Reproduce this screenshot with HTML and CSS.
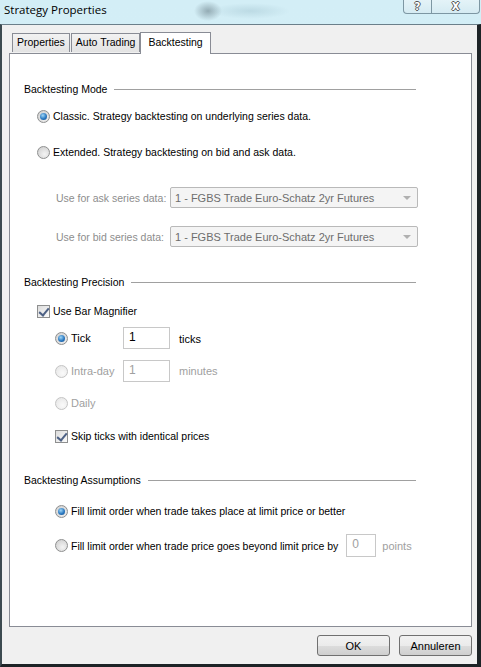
FILE: index.html
```html
<!DOCTYPE html>
<html lang="en">
<head>
    <meta charset="UTF-8">
    <title>Strategy Properties</title>
    <link rel="stylesheet" href="styles.css">
</head>
<body>
<div class="window">
    <div class="titlebar">
        <span class="caption">Strategy Properties</span>
        <div class="caption-buttons">
            <span class="cbtn help">?</span>
            <span class="cbtn close">X</span>
        </div>
    </div>
    <div class="client">
        <ul class="tabs">
            <li class="tab">Properties</li>
            <li class="tab">Auto Trading</li>
            <li class="tab active">Backtesting</li>
        </ul>
        <div class="panel">
            <div class="group-head head-mode"><span>Backtesting Mode</span><i class="rule"></i></div>

            <label class="row r-classic"><span class="radio on"></span>Classic. Strategy backtesting on underlying series data.</label>
            <label class="row r-extended"><span class="radio"></span>Extended. Strategy backtesting on bid and ask data.</label>

            <div class="row r-ask">
                <span class="field-label">Use for ask series data:</span>
                <div class="combo"><span>1 - FGBS Trade Euro-Schatz 2yr Futures</span><i class="arrow"></i></div>
            </div>
            <div class="row r-bid">
                <span class="field-label">Use for bid series data:</span>
                <div class="combo"><span>1 - FGBS Trade Euro-Schatz 2yr Futures</span><i class="arrow"></i></div>
            </div>

            <div class="group-head head-precision"><span>Backtesting Precision</span><i class="rule"></i></div>

            <label class="row r-magnifier"><span class="check on"></span>Use Bar Magnifier</label>
            <div class="row sub r-tick">
                <span class="radio on"></span><span class="opt">Tick</span>
                <span class="textbox">1</span><span class="unit">ticks</span>
            </div>
            <div class="row sub r-intra off">
                <span class="radio dis"></span><span class="opt">Intra-day</span>
                <span class="textbox dis">1</span><span class="unit">minutes</span>
            </div>
            <div class="row sub r-daily off">
                <span class="radio dis"></span><span class="opt">Daily</span>
            </div>
            <label class="row sub r-skip"><span class="check on"></span>Skip ticks with identical prices</label>

            <div class="group-head head-assume"><span>Backtesting Assumptions</span><i class="rule"></i></div>

            <label class="row sub r-fill1"><span class="radio on"></span>Fill limit order when trade takes place at limit price or better</label>
            <div class="row sub r-fill2">
                <span class="radio"></span>Fill limit order when trade price goes beyond limit price by
                <span class="textbox small dis">0</span><span class="unit gray">points</span>
            </div>
        </div>
        <div class="buttons">
            <button class="btn">OK</button>
            <button class="btn">Annuleren</button>
        </div>
    </div>
</div>
</body>
</html>
```

FILE: styles.css
```css
* {
    padding: 0;
    margin: 0;
    list-style: none;
    box-sizing: border-box;
}

body {
    width: 481px;
    height: 667px;
    overflow: hidden;
    font-family: "Liberation Sans", Arial, sans-serif;
    font-size: 10.5px;
    color: #000;
}

.window {
    width: 481px;
    height: 667px;
    display: flex;
    flex-direction: column;
    background:
        radial-gradient(ellipse 14px 10px at 208px 11px, rgba(70, 90, 100, .45), transparent),
        radial-gradient(ellipse 40px 8px at 250px 11px, rgba(120, 160, 175, .25), transparent),
        linear-gradient(#d3eef6, #d7f1f7);
}

/* caption bar */
.titlebar {
    height: 24px;
    display: flex;
    justify-content: space-between;
    align-items: flex-start;
}

.caption {
    font-family: "Open Sans", sans-serif;
    font-size: 11.5px;
    margin: 2px 0 0 4px;
    color: #000;
}

.caption-buttons {
    display: flex;
    margin-right: 1px;
    height: 14px;
    border: 1px solid #7d97a3;
    border-top: 0;
    border-radius: 0 0 4px 4px;
    background: linear-gradient(#e4f3f8, #d5ebf2);
}

.cbtn {
    display: flex;
    justify-content: center;
    align-items: center;
    height: 13px;
    font-family: "DejaVu Sans", sans-serif;
    font-weight: bold;
    color: #fff;
    text-shadow: -1px 0 #555, 1px 0 #555, 0 -1px #555, 0 1px #555;
}

.help {
    width: 28px;
    font-size: 10px;
    border-right: 1px solid #7d97a3;
}

.close {
    width: 47px;
    font-size: 10px;
}

/* dialog body */
.client {
    flex: 1;
    display: flex;
    flex-direction: column;
    background: #f0f0f0;
    border-top: 1px solid #6b7f8a;
    border-left: 2px solid #3c4a50;
    border-right: 4px solid #1d2326;
    border-bottom: 3px solid #1d2326;
    padding: 0 5px 0 7px;
}

.tabs {
    display: flex;
    align-items: flex-end;
    height: 28px;
    padding-left: 3px;
    position: relative;
    z-index: 1;
}

.tab {
    height: 19px;
    padding: 0 4px;
    line-height: 17px;
    font-size: 10.5px;
    border: 1px solid #898c95;
    border-bottom: 0;
    margin-right: 1px;
    background: linear-gradient(#f2f2f2, #e3e3e3);
    margin-bottom: 1px;
}

.tab.active {
    height: 22px;
    padding: 0 7px;
    margin-bottom: -1px;
    margin-left: -1px;
    background: #fff;
    line-height: 18px;
}

.panel {
    height: 574px;
    border: 1px solid #898c95;
    background: #fff;
    padding-left: 14px;
    display: flex;
    flex-direction: column;
}

.group-head {
    display: flex;
    align-items: center;
    height: 16px;
    width: 392px;
}

.group-head .rule {
    flex: 1;
    height: 1px;
    background: #a0a0a0;
    margin-left: 7px;
}

.head-mode { margin-top: 27px; }
.head-precision { margin-top: 27px; }
.head-assume { margin-top: 26px; }

.row {
    display: flex;
    align-items: center;
    height: 20px;
    padding-left: 13px;
    white-space: nowrap;
}

.row.sub {
    padding-left: 31px;
}

.r-classic { margin-top: 9px; }
.r-extended { margin-top: 16px; }
.r-ask { margin-top: 25px; height: 21px; }
.r-bid { margin-top: 18px; height: 21px; }
.r-magnifier { margin-top: 11px; }
.r-tick { margin-top: 6px; height: 22px; }
.r-intra { margin-top: 11px; height: 22px; }
.r-daily { margin-top: 11px; }
.r-skip { margin-top: 13px; }
.r-fill1 { margin-top: 13px; }
.r-fill2 { margin-top: 13px; height: 23px; }

.off, .unit.gray {
    color: #a0a0a0;
}

.field-label {
    width: 133px;
    padding-left: 19px;
    color: #8d8d8d;
}

.combo {
    width: 248px;
    height: 21px;
    display: flex;
    align-items: center;
    justify-content: space-between;
    padding: 0 6px 0 4px;
    border: 1px solid #b9b9b9;
    border-radius: 2px;
    background: #f4f4f4;
    color: #6d6d6d;
    font-size: 11px;
}

.combo .arrow {
    width: 0;
    height: 0;
    border-left: 4px solid transparent;
    border-right: 4px solid transparent;
    border-top: 4px solid #b0b0b0;
}

/* radio button */
.radio {
    width: 13px;
    height: 13px;
    border-radius: 50%;
    border: 1px solid #8e8f8f;
    background: radial-gradient(circle at 60% 65%, #f4f4f4, #d2d2d2 80%);
    margin-right: 3px;
    position: relative;
    flex: none;
}

.radio.on::after {
    content: "";
    position: absolute;
    left: 2px;
    top: 2px;
    width: 7px;
    height: 7px;
    border-radius: 50%;
    background: radial-gradient(circle at 40% 35%, #9fd6f6, #2b79c1 55%, #134a87);
}

.radio.dis {
    border-color: #c4c4c4;
    background: radial-gradient(circle at 60% 65%, #fafafa, #e8e8e8 80%);
}

/* checkbox */
.check {
    width: 13px;
    height: 13px;
    border: 1px solid #8e8f8f;
    background: linear-gradient(135deg, #dcdcdc, #fbfbfb);
    margin-right: 3px;
    position: relative;
    flex: none;
}

.check.on::after {
    content: "";
    position: absolute;
    left: 3px;
    top: 0;
    width: 4px;
    height: 8px;
    border-right: 2px solid #4d6185;
    border-bottom: 2px solid #4d6185;
    transform: rotate(40deg);
}

.opt {
    width: 52px;
    font-size: 11px;
}

.textbox {
    width: 47px;
    height: 22px;
    border: 1px solid #c8c8c8;
    padding: 2px 0 0 5px;
    font-size: 12px;
    color: #000;
    margin-right: 9px;
}

.textbox.dis {
    color: #a0a0a0;
}

.textbox.small {
    width: 30px;
    height: 23px;
    margin: 0 6px 0 8px;
}

.unit {
    font-size: 11px;
}

.r-tick .unit {
    margin-top: 2px;
}

.buttons {
    display: flex;
    justify-content: flex-end;
    padding: 8px 0 0;
    gap: 9px;
}

.btn {
    width: 73px;
    height: 21px;
    font-family: "Liberation Sans", Arial, sans-serif;
    font-size: 11px;
    color: #000;
    border: 1px solid #707070;
    border-radius: 3px;
    background: linear-gradient(#f2f2f2 0%, #ebebeb 50%, #dddddd 51%, #cfcfcf 100%);
}
```
